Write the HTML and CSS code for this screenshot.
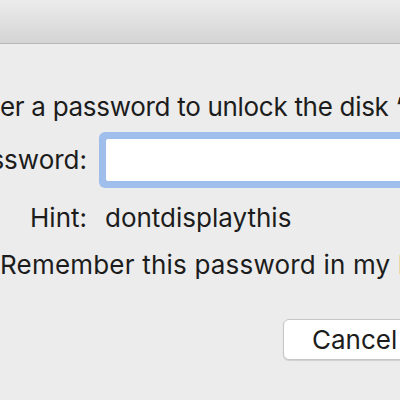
FILE: index.html
```html
<!DOCTYPE html>
<html>
<head>
<meta charset="utf-8">
<link rel="stylesheet" href="styles.css">
</head>
<body>
<div class="window">
  <div class="titlebar"></div>
  <div class="content">
    <p class="message">er a password to unlock the disk “Untitled”</p>
    <div class="form">
      <span class="label">ssword:</span>
      <div class="field"><div class="field-inner"></div></div>
      <span class="label hint-label">Hint:</span>
      <span class="hint-value">dontdisplaythis</span>
    </div>
    <p class="remember">Remember this password in my keychain</p>
    <div class="buttons">
      <button class="btn">Cancel</button>
    </div>
  </div>
</div>
</body>
</html>
```
FILE: styles.css
```css
html, body {
  margin: 0;
  padding: 0;
  width: 400px;
  height: 400px;
  overflow: hidden;
  background: #ececec;
}
.window {
  width: 400px;
  height: 400px;
  overflow: hidden;
  font-family: Inter, "Noto Sans", sans-serif;
  font-size: 26px;
  color: #1c1c1c;
}
.titlebar {
  height: 43px;
  background: linear-gradient(#ececec, #d4d4d4);
  border-bottom: 1px solid #b9b9b9;
}
.content {
  white-space: nowrap;
}
.message {
  margin: 48px 0 0 0;
  line-height: 30px;
  letter-spacing: -0.3px;
}
.form {
  display: grid;
  grid-template-columns: 87px 1fr;
  column-gap: 12px;
  align-items: center;
  margin-top: 10px;
  line-height: 30px;
}
.label {
  justify-self: end;
}
.field {
  height: 56px;
  width: 330px;
  box-sizing: border-box;
  padding: 7px;
  border-radius: 6px;
  background: #9fbeec;
}
.field-inner {
  height: 100%;
  background: #fff;
  border-radius: 2px;
}
.hint-label {
  margin-top: 15px;
}
.hint-value {
  margin-top: 15px;
  padding-left: 6px;
}
.remember {
  margin: 17px 0 0 0;
  line-height: 30px;
  letter-spacing: 0.2px;
}
.buttons {
  margin-top: 39px;
  padding-left: 283px;
}
.btn {
  width: 150px;
  height: 41px;
  box-sizing: border-box;
  background: #fff;
  border: 1px solid #c6c6c6;
  border-radius: 6px;
  box-shadow: 0 1px 1px rgba(0,0,0,0.12);
  font-family: inherit;
  font-size: 26px;
  color: #1c1c1c;
  text-align: left;
  padding: 0 0 0 28px;
  line-height: 30px;
}
```
